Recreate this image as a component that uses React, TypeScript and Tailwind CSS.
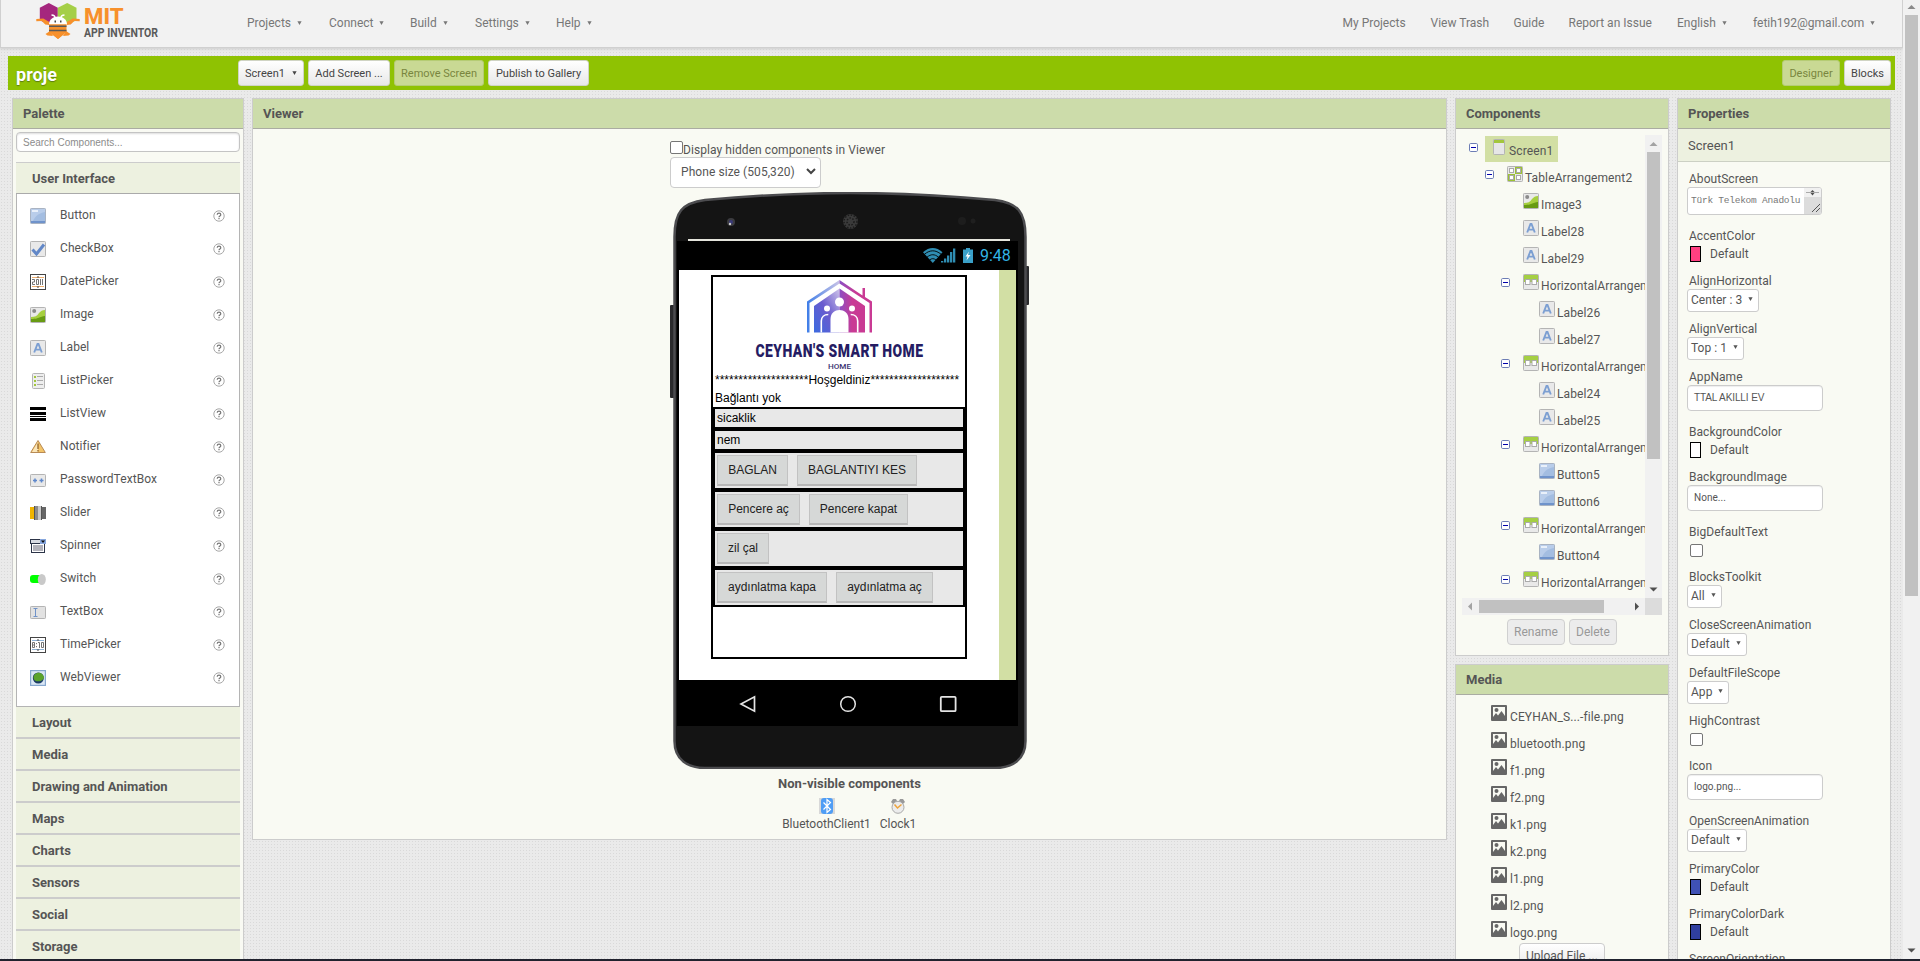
import React from "react";

type IconName =
  | "button" | "checkbox" | "date" | "image" | "label" | "listpicker" | "listview"
  | "notifier" | "password" | "slider" | "spinner" | "switch" | "textbox" | "time"
  | "web" | "screen" | "table" | "horizontal";

const Frame = () => (
  <rect x=".5" y=".5" width="15" height="15" rx=".8" fill="#e9e9e9" stroke="#b4b4b4" />
);

function Icon({ name }: { name: IconName }) {
  return (
    <svg width="16" height="16" viewBox="0 0 16 16" className="block shrink-0">
      {name === "button" && (
        <>
          <rect x=".5" y=".5" width="15" height="15" rx=".8" fill="#a3bde1" stroke="#a9b3c2" />
          <path d="M1 1h14v3C9 5 5 8 3 13H1z" fill="#b9cdea" />
          <path d="M2 2h6v2H2z" fill="#e9f0fa" />
          <path d="M1 13h14v2H1z" fill="#6f93cb" />
        </>
      )}
      {name === "checkbox" && (
        <>
          <Frame />
          <path d="M2.5 8.5l4 4.5L14 3.5" fill="none" stroke="#6288c8" strokeWidth="3" />
        </>
      )}
      {(name === "date" || name === "time") && (
        <>
          <rect x=".5" y=".5" width="15" height="15" fill="#fff" stroke="#444" />
          <path d="M2 3.5h12M2 12.5h12" stroke={name === "date" ? "#f0b070" : "#8fb4d8"} />
          <path d="M6.500 3.500l1.500-1.500 1.500 1.500zM6.500 12.500l1.500 1.500 1.500-1.500z" fill="#444" />
          {name === "date" ? (
            <path d="M2 5.500h2.500v2.500h-2v2.500h2.500M6.500 5.500h2v5h-2zM10.500 5v6M12.500 5v6" fill="none" stroke="#666" strokeWidth=".9" />
          ) : (
            <path d="M2.500 5.500h2v5h-2zM2.500 8h2M6.500 6v1.200M6.500 9v1.200M8 5.500h1.500v5.500M11.500 5.500h2v5h-2z" fill="none" stroke="#666" strokeWidth=".9" />
          )}
        </>
      )}
      {name === "image" && (
        <>
          <Frame />
          <circle cx="4.200" cy="4" r="2" fill="#8b8b8b" />
          <path d="M1 10c4 0 6-1 8-4 2-2 3-3 6-3v12H1z" fill="#a6cf3f" />
          <path d="M1 12c5 0 7-1 10-2 2-1 3-1 4-1v6H1z" fill="#689b13" />
        </>
      )}
      {name === "label" && (
        <>
          <Frame />
          <path d="M4.200 12.500L7.500 4h1L11.800 12.500M5.500 9.600h5" fill="none" stroke="#7c9fd2" strokeWidth="1.900" />
        </>
      )}
      {name === "listpicker" && (
        <>
          <rect x="2.500" y=".5" width="12" height="15" rx="1" fill="#eee" stroke="#b4b4b4" />
          <path d="M4 4h2M4 8h2M4 12h2" stroke="#a2c63c" strokeWidth="2" />
          <path d="M7 3.500h6M7 7.500h6M7 11.500h6" stroke="#aaa" />
        </>
      )}
      {name === "listview" && <path d="M0 1h16v3H0zM0 6h16v3H0zM0 10h16v1H0zM0 12h16v3H0z" fill="#000" />}
      {name === "notifier" && (
        <>
          <path d="M8 1.500L15.300 13.500H.7z" fill="#f3c469" stroke="#b88a55" />
          <path d="M8 3v10H2z" fill="#fae5b8" />
          <path d="M8 4.500v5.500M8 11v1.500" stroke="#8a5a22" strokeWidth="1.200" />
        </>
      )}
      {name === "password" && (
        <>
          <rect x=".5" y="2.500" width="15" height="12" rx=".8" fill="#e9e9e9" stroke="#b4b4b4" />
          <path d="M3 8.500h4M5 6.500v4M9.500 8.500h4M11.500 6.500v4" stroke="#5f88cc" strokeWidth="1.500" />
        </>
      )}
      {name === "slider" && (
        <>
          <path d="M0 2h5v12H0z" fill="#f0b400" />
          <path d="M11 2h5v12h-5z" fill="#666" />
          <rect x="5" y="1" width="3" height="14" fill="#8a8a8a" />
          <rect x="8" y="1" width="3" height="14" fill="#c9c9c9" />
          <path d="M4.500 1v14M11.500 1v14" stroke="#555" />
        </>
      )}
      {name === "spinner" && (
        <>
          <rect x="1.500" y="5" width="13" height="9.500" fill="#fff" stroke="#2c3448" />
          <rect x=".5" y="1.500" width="15" height="4" fill="#d8dbe2" stroke="#2c3448" />
          <rect x="10" y="1" width="6" height="5" fill="#86a6dd" />
          <path d="M11 2.500h4L13 5z" fill="#111" />
          <path d="M3 8h10M3 10h10M3 12h10" stroke="#667" />
        </>
      )}
      {name === "switch" && (
        <>
          <rect x="0" y="4" width="12" height="8" rx="3" fill="#0f0" />
          <ellipse cx="11.800" cy="8.500" rx="4" ry="5.500" fill="#c9c9c9" />
        </>
      )}
      {name === "textbox" && (
        <>
          <rect x=".5" y="2.500" width="15" height="12" rx=".8" fill="#e2e2e2" stroke="#b4b4b4" />
          <path d="M3.500 4.500h4M3.500 12.500h4M5.500 4.500v8" stroke="#7193c8" />
        </>
      )}
      {name === "web" && (
        <>
          <rect x=".5" y=".5" width="15" height="15" fill="#dbe8f5" stroke="#87a8cf" strokeWidth="1.400" />
          <circle cx="8.300" cy="8" r="5.500" fill="#1c3c66" />
          <path d="M3.500 7.500c0-4 6-6.500 9-3s1 5-2 6.500c-3 1-7 0-7-3.500z" fill="#5ba32c" />
        </>
      )}
      {name === "screen" && (
        <>
          <rect x="2.500" y=".5" width="11" height="15" rx=".8" fill="#e6e6e6" stroke="#b4b4b4" />
          <path d="M3 1h10v3H3z" fill="#a2c63c" />
        </>
      )}
      {name === "table" && (
        <>
          <Frame />
          <path d="M8 1h7v7H8zM1 8h7v7H1z" fill="#9cc233" />
          <g fill="#fff" stroke="#aaa">
            <rect x="2.500" y="2.500" width="4" height="4" />
            <rect x="9.500" y="2.500" width="4" height="4" />
            <rect x="2.500" y="9.500" width="4" height="4" />
            <rect x="9.500" y="9.500" width="4" height="4" />
          </g>
        </>
      )}
      {name === "horizontal" && (
        <>
          <Frame />
          <path d="M1 1h14v7H1z" fill="#a5cf43" />
          <g fill="#fff" stroke="#aaa">
            <rect x="2.500" y="5.500" width="4.500" height="5" />
            <rect x="9" y="5.500" width="4.500" height="5" />
          </g>
        </>
      )}
    </svg>
  );
}

const Arrow = ({ className = "" }: { className?: string }) => (
  <svg width="5" height="4" viewBox="0 0 5 4" className={"mb-[1px] shrink-0 " + className}>
    <path d="M.4.2h4.200L2.500 4z" fill="currentColor" />
  </svg>
);

function Logo() {
  return (
    <svg width="130" height="42" viewBox="34 0 130 42" className="block">
      <path d="M48.800 3l9 4.800V20l-9 4-9-3.500V7.800z" fill="#a5277e" />
      <path d="M67.200 3l9.300 4.800v12.700l-9.300 3.500-9.400-4V7.800z" fill="#a5cf47" />
      <path d="M36.300 19l7-.5 6 3.500v3l-4-.5-3.500-3.500-5.500.3zM79.700 19l-7-.5-6 3.500v3l4-.5 3.500-3.500 5.500.3z" fill="#f7902b" />
      <path d="M49 24.500c0-5 4-8 9-8s9 3 9 8z" fill="#fff" />
      <path d="M55 17.500c0-2-1-2.300-3.500-2.500M61 17.500c0-2 1-2.300 3.500-2.500" fill="none" stroke="#fff" strokeWidth="1.400" />
      <path d="M54.500 20.500h1.500v2h-1.500zM60 20.500h1.500v2H60z" fill="#444" />
      <path d="M49 24.300h17.500V32L58 39l-9-7z" fill="#f7902b" />
      <path d="M50 31l-4.500 3 2 1.500 5.500.5zM66 31l4.500 3-2 1.500-5.500.5z" fill="#f7902b" />
      <path d="M52 34h12l-6 5z" fill="#f7902b" />
      <path d="M49 26.300h17.500M49 30.500h17.500" stroke="#5a5a5a" strokeWidth="1.500" />
      <text x="84" y="24" textLength="39.500" lengthAdjust="spacingAndGlyphs" fontFamily="Roboto, sans-serif" fontWeight="800" fontSize="21.500" fill="#f7902b">MIT</text>
      <text x="84" y="36.500" textLength="74" lengthAdjust="spacingAndGlyphs" fontFamily="Roboto, sans-serif" fontWeight="700" fontSize="12.500" fill="#5a5a5a">APP INVENTOR</text>
    </svg>
  );
}

function Header() {
  const menu: [string, string][] = [
    ["Projects", "w-[82px]"],
    ["Connect", "w-[81px]"],
    ["Build", "w-[65px]"],
    ["Settings", "w-[81px]"],
    ["Help", "w-[60px]"],
  ];
  const right: [string, string, boolean][] = [
    ["My Projects", "w-[88px]", false],
    ["View Trash", "w-[83px]", false],
    ["Guide", "w-[55px]", false],
    ["Report an Issue", "w-[108.5px]", false],
    ["English", "w-[76px]", true],
    ["fetih192@gmail.com", "w-[149px]", true],
  ];
  return (
    <header className="flex h-[48px] shrink-0 border-r border-b border-l border-[#d0d0d0] bg-[#f2f2f2] text-[12px] leading-4 text-[#777] shadow-[0_1px_3px_#ccc]">
      <div className="w-[246px] pl-[33px]"><Logo /></div>
      <nav className="flex items-start pt-[15px]">
        {menu.map(([t, w]) => (
          <div key={t} className={"flex items-center whitespace-nowrap " + w}>
            {t}<Arrow className="ml-[6px]" />
          </div>
        ))}
      </nav>
      <nav className="ml-auto flex items-start pt-[15px]">
        {right.map(([t, w, a]) => (
          <div key={t} className={"flex items-center whitespace-nowrap " + w}>
            {t}{a && <Arrow className="ml-[6px]" />}
          </div>
        ))}
      </nav>
    </header>
  );
}

function BarButton({ children, width, off }: { children: React.ReactNode; width: string; off?: boolean }) {
  return (
    <div
      className={
        "flex h-[26px] items-center justify-center rounded-[3px] border pt-[1px] text-[11px] leading-4 whitespace-nowrap " +
        width +
        (off
          ? " border-[#b5cc74] bg-[#c9d994] text-[#79863f]"
          : " border-[#d0d4c4] bg-gradient-to-b from-white to-[#e8e8e8] text-[#444]")
      }
    >
      {children}
    </div>
  );
}

function ProjectBar() {
  return (
    <div className="mt-[8px] mr-[8px] ml-[8px] flex h-[34px] shrink-0 bg-[#8fc202] px-[8px] pt-[4px]">
      <div className="w-[222px] pt-[3px] text-[18px] leading-6 font-bold text-white [text-shadow:0_1px_1px_#5c7d10]">proje</div>
      <div className="flex gap-1">
        <BarButton width="w-[66px]">Screen1<Arrow className="ml-[7px]" /></BarButton>
        <BarButton width="w-[82px]">Add Screen ...</BarButton>
        <BarButton width="w-[90px]" off>Remove Screen</BarButton>
        <BarButton width="w-[101px]">Publish to Gallery</BarButton>
      </div>
      <div className="-mr-[4px] ml-auto flex gap-1">
        <BarButton width="w-[58px]" off>Designer</BarButton>
        <BarButton width="w-[47px]">Blocks</BarButton>
      </div>
    </div>
  );
}

function Panel({ title, className, children }: { title: string; className: string; children: React.ReactNode }) {
  return (
    <section className={"flex shrink-0 flex-col overflow-hidden border border-[#ccc] bg-[#f9faf3] " + className}>
      <h2 className="h-[30px] shrink-0 border-b border-[#aaaca2] bg-[#ccdcaa] pl-[10px] text-[13px] leading-[29px] font-bold text-[#555]">
        {title}
      </h2>
      {children}
    </section>
  );
}

const paletteItems: [string, IconName][] = [
  ["Button", "button"], ["CheckBox", "checkbox"], ["DatePicker", "date"], ["Image", "image"],
  ["Label", "label"], ["ListPicker", "listpicker"], ["ListView", "listview"], ["Notifier", "notifier"],
  ["PasswordTextBox", "password"], ["Slider", "slider"], ["Spinner", "spinner"], ["Switch", "switch"],
  ["TextBox", "textbox"], ["TimePicker", "time"], ["WebViewer", "web"],
];
const sections = ["Layout", "Media", "Drawing and Animation", "Maps", "Charts", "Sensors", "Social", "Storage"];

function Palette() {
  return (
    <Panel title="Palette" className="h-[900px] w-[232px]">
      <div className="px-[3px] pt-[3px]">
        <div className="h-[20px] rounded-[4px] border border-[#c4c4c4] bg-white pl-[6px] font-['Liberation_Sans',sans-serif] text-[10px] leading-[19px] text-[#8c8c8c] shadow-[inset_0_1px_2px_#ddd]">
          Search Components...
        </div>
        <div className="mt-[10px] h-[32px] border-t border-b border-t-[#ccc] border-b-[#aaa] bg-[#edf1e0] pl-[16px] text-[13px] leading-[32px] font-bold text-[#555]">
          User Interface
        </div>
        <div className="h-[513px] border-r border-b border-l border-[#b4b4b4] bg-white pt-[6px]">
          {paletteItems.map(([t, n]) => (
            <div key={t} className="flex h-[33px] pr-[14px] pl-[13px]">
              <div className="pt-[8px]"><Icon name={n} /></div>
              <div className="ml-[14px] pt-[7px] text-[12px] leading-4 tracking-[0.07px] text-[#555]">{t}</div>
              <svg width="12" height="12" viewBox="0 0 12 12" className="mt-[10px] ml-auto">
                <circle cx="6" cy="6" r="5.200" fill="#fff" stroke="#a8a8a8" />
                <path d="M4.200 4.800c0-2.200 3.600-2.200 3.600 0 0 1.200-1.800 1.200-1.800 2.400M6 8v1.200" fill="none" stroke="#777" strokeWidth="1.200" />
              </svg>
            </div>
          ))}
        </div>
        {sections.map((s) => (
          <div key={s} className="h-[32px] border-b-2 border-[#ccc] bg-[#edf1e0] pl-[16px] text-[13px] leading-[32px] font-bold text-[#555]">
            {s}
          </div>
        ))}
      </div>
    </Panel>
  );
}

const MockLabel = ({ children }: { children: string }) => (
  <div className="h-[22px] border-2 border-black bg-[#e8e8e8] pt-[1px] pl-[2px]">{children}</div>
);

function MockButtons({ items }: { items: [string, string][] }) {
  return (
    <div className="flex h-[39px] gap-[9px] border-2 border-black bg-[#e8e8e8] pt-[2px] pl-[2px]">
      {items.map(([t, w]) => (
        <div key={t} className={"h-[31px] border border-b-2 border-[#c2c2c2] border-b-[#b8b8b8] bg-[#d6d8d7] pt-[6px] text-center text-[#222] whitespace-nowrap " + w}>
          {t}
        </div>
      ))}
    </div>
  );
}

function HomeLogo() {
  return (
    <svg width="252" height="95" viewBox="713 277 252 95" className="block">
      <defs>
        <linearGradient id="blue" x1="0" x2="1"><stop offset="0" stopColor="#3f7ee8" /><stop offset="1" stopColor="#c9c3e6" /></linearGradient>
        <linearGradient id="pink" x1="0" x2="1"><stop offset="0" stopColor="#8a4fc4" /><stop offset=".5" stopColor="#c93a94" /><stop offset="1" stopColor="#c93a94" /></linearGradient>
        <linearGradient id="wall" x1="0" y1="1" x2="1" y2="0"><stop offset="0" stopColor="#3b6be0" /><stop offset=".5" stopColor="#6a5bce" /><stop offset="1" stopColor="#cfc4ea" /></linearGradient>
      </defs>
      <path d="M807 332.500V301.500L839.500 280v3.500L809.500 303v29.500z" fill="url(#blue)" />
      <path d="M872 332.500V301.500L865 297V288h-2.500v7.500L839.500 280v3.500L869.500 303v29.500z" fill="url(#pink)" />
      <path d="M814 332.500V306l25.500-17.500V332.500z" fill="url(#wall)" />
      <path d="M839.500 288.500L865 306v26.500H839.500z" fill="url(#pink)" />
      <path d="M830.500 332.500V319c0-12 18-12 18 0v13.500z" fill="#fff" />
      <circle cx="839.500" cy="302" r="4.500" fill="#fff" />
      <circle cx="827" cy="308.500" r="3" fill="#fff" />
      <circle cx="852" cy="308.500" r="3" fill="#fff" />
      <path d="M821.300 332.500V321c0-4 3-6.500 7-6.500M857.700 332.500V321c0-4-3-6.500-7-6.500" fill="none" stroke="#fff" strokeWidth="1.600" />
      <text x="755.500" y="356.800" textLength="168" lengthAdjust="spacingAndGlyphs" fontFamily="Roboto, sans-serif" fontWeight="900" fontSize="19" letterSpacing=".6" fill="#251c63">CEYHAN'S SMART HOME</text>
      <text x="828" y="368.500" textLength="23" lengthAdjust="spacingAndGlyphs" fontFamily="Roboto, sans-serif" fontWeight="500" fontSize="7.500" fill="#3a3270">HOME</text>
    </svg>
  );
}

function Phone() {
  return (
    <div className="relative mt-[4px] h-[577px] w-[359px]">
      <svg width="359" height="577" viewBox="0 0 359 577" className="absolute inset-0">
        <rect x="0" y="113" width="5" height="93" rx="1" fill="#2a2a2c" />
        <rect x="355" y="74" width="4" height="39" rx="1" fill="#2a2a2c" />
        <path
          d="M4.500 45C4.500 20 12 11 35 8 C90 3 135 1 180 1 C225 1 270 3 325 8 C348 11 355.500 20 355.500 45 V549 C355.500 568 342 576 325 576 H35 C18 576 4.500 568 4.500 549Z"
          fill="#141414" stroke="#4c4c4f" strokeWidth="2.500"
        />
        <circle cx="61" cy="30" r="4" fill="#3c3c40" />
        <circle cx="61" cy="30" r="2" fill="#3a3a78" />
        <circle cx="60" cy="32" r="1.200" fill="#ccc" />
        <circle cx="180.500" cy="29.500" r="7.500" fill="#3a3a3a" />
        <circle cx="180.500" cy="29.500" r="6.500" fill="none" stroke="#1c1c1c" strokeDasharray="1.500 1.500" strokeWidth="1.500" />
        <circle cx="180.500" cy="29.500" r="3.500" fill="none" stroke="#1c1c1c" strokeDasharray="1.500 1.500" strokeWidth="1.500" />
        <circle cx="292" cy="29" r="4" fill="#1d1d1d" />
        <circle cx="303" cy="29" r="2.500" fill="#1f1f1f" />
      </svg>
      <div className="relative pl-[7px]">
        <div className="flex h-[49px] items-end pl-[11px]"><div className="h-[2px] w-[322px] bg-[#e4e4dc]" /></div>
        <div className="flex h-[29px] w-[341px] bg-black">
          <svg width="52" height="17" viewBox="0 0 52 17" className="mt-[6px] ml-[246px]">
            <path d="M0 5.200C6-.5 13.500-.5 19.500 5.200L9.800 16z" fill="#2f8db2" />
            <path d="M1.500 7.200c5.500-4.500 11-4.500 16.500 0M4 10.200c4-3.300 7.600-3.300 11.500 0M6.500 13c2.300-1.800 4.300-1.800 6.500 0" fill="none" stroke="#000" strokeWidth=".9" />
            <path d="M18 14h2.300v1.500H18zM21 11.500h2.300v4H21zM24 8.500h2.300v7H24zM27 5h2.300v10.500H27zM30 1.500h2.300v14H30z" fill="#2f8db2" />
            <path d="M40 2.500h3V1h4v1.500h3v13.500H40z" fill="#3aa0c8" />
            <path d="M46 4.500l-3.500 5h2l-1 4 4-5.500h-2.500z" fill="#fff" />
          </svg>
          <div className="ml-[5px] pt-[5px] text-[16px] leading-5 text-[#33b5e5]">9:48</div>
        </div>
        <div className="flex h-[410px] w-[341px] border-r-2 border-l-2 border-black bg-[#d2dfa4]">
          <div className="w-[320px] bg-white pt-[5px] pl-[32px]">
            <div className="h-[384px] w-[256px] border-2 border-black font-['Liberation_Sans',Arial,sans-serif] text-[12px] leading-4 text-black">
              <HomeLogo />
              <div className="h-[18px] pl-[2px] whitespace-nowrap">********************Hoşgeldiniz*******************</div>
              <div className="h-[17px] pl-[2px]">Bağlantı yok</div>
              <MockLabel>sicaklik</MockLabel>
              <MockLabel>nem</MockLabel>
              <MockButtons items={[["BAGLAN", "w-[71px]"], ["BAGLANTIYI KES", "w-[120px]"]]} />
              <MockButtons items={[["Pencere aç", "w-[83px]"], ["Pencere kapat", "w-[99px]"]]} />
              <MockButtons items={[["zil çal", "w-[52px]"]]} />
              <MockButtons items={[["aydınlatma kapa", "w-[110px]"], ["aydınlatma aç", "w-[97px]"]]} />
            </div>
          </div>
        </div>
        <div className="flex h-[46px] w-[341px] bg-black pt-[15px] pl-[62px] text-[#e4e4e4]">
          <svg width="18" height="18" viewBox="0 0 18 18"><path d="M15.500 1.800v14.400L2 9z" fill="none" stroke="currentColor" strokeWidth="1.700" /></svg>
          <svg width="18" height="18" viewBox="0 0 18 18" className="ml-[82px]"><circle cx="9" cy="9" r="7.300" fill="none" stroke="currentColor" strokeWidth="1.500" /></svg>
          <svg width="18" height="18" viewBox="0 0 18 18" className="ml-[82px]"><rect x="1.800" y="1.800" width="14.800" height="14.400" rx="1" fill="none" stroke="currentColor" strokeWidth="1.800" /></svg>
        </div>
      </div>
    </div>
  );
}

function Viewer() {
  return (
    <Panel title="Viewer" className="h-[742px] w-[1195px]">
      <div className="flex flex-col pl-[417px] text-[12px] leading-4 text-[#555]">
        <div className="flex pt-[12px]">
          <div className="h-[13px] w-[13px] rounded-[2px] border border-[#767676] bg-white" />
          <div className="pt-[1px] tracking-[0.07px]">Display hidden components in Viewer</div>
        </div>
        <div className="-mt-[1px] flex h-[31px] w-[151px] items-center rounded-[4px] border border-[#ccc] bg-white pb-[2px] pl-[10px]">
          <span className="w-[125px] tracking-[0.07px]">Phone size (505,320)</span>
          <svg width="10" height="7" viewBox="0 0 10 7"><path d="M1 1l4 4 4-4" fill="none" stroke="#444" strokeWidth="2" /></svg>
        </div>
        <Phone />
        <div className="w-[359px] pt-[7px] text-center text-[13px] leading-4 font-bold">Non-visible components</div>
        <div className="flex pt-[6px] pl-[112px]">
          <div className="flex w-[89px] flex-col items-center">
            <svg width="16" height="16" viewBox="0 0 16 16">
              <rect width="16" height="16" fill="#d8d8d8" />
              <rect x="2" width="12" height="16" rx="3" fill="#4f9df5" />
              <path d="M4.500 4.500l7 7L8 14.500V1.500l3.500 3-7 7" fill="none" stroke="#fff" strokeWidth="1.200" />
            </svg>
            <div className="pt-[2px]">BluetoothClient1</div>
          </div>
          <div className="ml-[8px] flex w-[37px] flex-col items-center">
            <svg width="16" height="16" viewBox="0 0 16 16">
              <path d="M1 4l2-3h3l1 2-4 3zM15 4l-2-3h-3L9 3l4 3z" fill="#999" />
              <circle cx="8" cy="9.300" r="6" fill="#ececec" stroke="#a8a8a8" />
              <path d="M4.500 6.500L7.500 10l4-3.500" fill="none" stroke="#eda33c" strokeWidth="1.500" />
            </svg>
            <div className="pt-[2px] pl-[1px]">Clock1</div>
          </div>
        </div>
      </div>
    </Panel>
  );
}

type Node = { name: string; icon: IconName; level: number; open?: boolean };
const tree: Node[] = [
  { name: "Screen1", icon: "screen", level: 0, open: true },
  { name: "TableArrangement2", icon: "table", level: 1, open: true },
  { name: "Image3", icon: "image", level: 2 },
  { name: "Label28", icon: "label", level: 2 },
  { name: "Label29", icon: "label", level: 2 },
  { name: "HorizontalArrangement9", icon: "horizontal", level: 2, open: true },
  { name: "Label26", icon: "label", level: 3 },
  { name: "Label27", icon: "label", level: 3 },
  { name: "HorizontalArrangement8", icon: "horizontal", level: 2, open: true },
  { name: "Label24", icon: "label", level: 3 },
  { name: "Label25", icon: "label", level: 3 },
  { name: "HorizontalArrangement2", icon: "horizontal", level: 2, open: true },
  { name: "Button5", icon: "button", level: 3 },
  { name: "Button6", icon: "button", level: 3 },
  { name: "HorizontalArrangement3", icon: "horizontal", level: 2, open: true },
  { name: "Button4", icon: "button", level: 3 },
  { name: "HorizontalArrangement4", icon: "horizontal", level: 2, open: true },
];
const indents = ["pl-[7px]", "pl-[23px]", "pl-[39px]", "pl-[55px]"];

function TreeRow({ node }: { node: Node }) {
  return (
    <div className={"flex h-[27px] " + indents[node.level]}>
      <svg width="9" height="9" viewBox="0 0 9 9" className={"mt-[7px] shrink-0 " + (node.open ? "" : "invisible")}>
        <rect x=".5" y=".5" width="8" height="8" rx="1.200" fill="#fff" stroke="#6d7db5" />
        <path d="M2 4.500h5" stroke="#00a" />
      </svg>
      <div className={"ml-[7px] flex h-[26px] pt-[3px] pr-[5px] pl-[6px] " + (node.level === 0 ? "bg-[#d2dfa4]" : "")}>
        <Icon name={node.icon} />
        <span className="ml-[2px] pt-[4px] tracking-[0.12px] whitespace-nowrap">{node.name}</span>
      </div>
    </div>
  );
}

const SmallButton = ({ children, width }: { children: string; width: string }) => (
  <div className={"h-[26px] rounded-[4px] border border-[#d0d0d0] bg-[#ececec] text-center text-[12px] leading-[25px] text-[#999] " + width}>
    {children}
  </div>
);

function Components() {
  return (
    <Panel title="Components" className="h-[558px] w-[214px]">
      <div className="mt-[6px] ml-[6px] w-[200px]">
        <div className="flex h-[463px]">
          <div className="w-[183px] overflow-hidden pt-[1px] text-[12px] leading-4 text-[#555]">
            {tree.map((n, i) => <TreeRow key={i} node={n} />)}
          </div>
          <div className="flex w-[17px] flex-col items-center bg-[#f1f1f1]">
            <svg width="17" height="17" viewBox="0 0 17 17"><path d="M4.500 11h8l-4-4z" fill="#a3a3a3" /></svg>
            <div className="h-[307px] w-[13px] bg-[#c1c1c1]" />
            <svg width="17" height="17" viewBox="0 0 17 17" className="mt-auto"><path d="M4.500 6.500h8l-4 4z" fill="#505050" /></svg>
          </div>
        </div>
        <div className="flex h-[17px] items-center bg-[#f1f1f1]">
          <svg width="17" height="17" viewBox="0 0 17 17"><path d="M10 4.500v8l-4-4z" fill="#a3a3a3" /></svg>
          <div className="h-[13px] w-[125px] bg-[#c1c1c1]" />
          <svg width="17" height="17" viewBox="0 0 17 17" className="ml-auto"><path d="M7 4.500v8l4-4z" fill="#505050" /></svg>
          <div className="h-[17px] w-[17px] bg-[#dcdcdc]" />
        </div>
        <div className="mt-[4px] flex gap-1 pl-[45px]">
          <SmallButton width="w-[58px]">Rename</SmallButton>
          <SmallButton width="w-[48px]">Delete</SmallButton>
        </div>
      </div>
    </Panel>
  );
}

const files = ["CEYHAN_S...-file.png", "bluetooth.png", "f1.png", "f2.png", "k1.png", "k2.png", "l1.png", "l2.png", "logo.png"];

function Media() {
  return (
    <Panel title="Media" className="mt-[8px] h-[400px] w-[214px]">
      <div className="pt-[8px] pl-[35px] text-[12px] leading-4 text-[#555]">
        {files.map((f) => (
          <div key={f} className="flex h-[27px] pt-[2px]">
            <svg width="16" height="16" viewBox="0 0 16 16" className="shrink-0">
              <path fillRule="evenodd" d="M1 0h14a1 1 0 0 1 1 1v14a1 1 0 0 1-1 1H1a1 1 0 0 1-1-1V1a1 1 0 0 1 1-1zM2 2v10l3-4 2 2.500L10.500 6 14 11V2z" fill="#666" />
              <circle cx="5.500" cy="5" r="2" fill="#666" />
            </svg>
            <span className="ml-[3px] pt-[4px] tracking-[0.1px]">{f}</span>
          </div>
        ))}
        <div className="-mt-[3px] ml-[28px] h-[26px] w-[86px] rounded-[4px] border border-[#ccc] bg-gradient-to-b from-white to-[#e8e8e8] pl-[6px] leading-[25px]">
          Upload File ...
        </div>
      </div>
    </Panel>
  );
}

const Prop = ({ name, height = "h-[45px]", children }: { name: string; height?: string; children?: React.ReactNode }) => (
  <div className={height}>
    <div className="pl-[2px]">{name}</div>
    {children}
  </div>
);
const Swatch = ({ color }: { color: string }) => (
  <div className="flex pl-[3px]">
    <div className={"mt-[2px] h-[16px] w-[11px] border border-black " + color} />
    <span className="ml-[9px] pt-[2px]">Default</span>
  </div>
);
const Select = ({ value, width }: { value: string; width: string }) => (
  <div className={"flex h-[23px] items-center rounded-[3px] border border-[#ccc] bg-white pb-[2px] pl-[3px] whitespace-nowrap " + width}>
    {value}<Arrow className="ml-[6px]" />
  </div>
);
const Input = ({ value, sans }: { value: string; sans?: boolean }) => (
  <div className={"h-[26px] w-[136px] rounded-[4px] border border-[#ccc] bg-white pl-[6px] text-[10px] leading-[24px] shadow-[inset_0_1px_1px_#eee] " + (sans ? "font-['Liberation_Sans',sans-serif] tracking-[-0.1px]" : "")}>
    {value}
  </div>
);
const Check = () => <div className="mt-[4px] ml-[3px] h-[13px] w-[13px] rounded-[2px] border border-[#767676] bg-white" />;

function Properties() {
  return (
    <Panel title="Properties" className="h-[900px] w-[214px]">
      <div className="h-[33px] shrink-0 border-b border-[#ccd0c4] bg-[#edf1e0] pl-[10px] text-[13px] leading-[33px] text-[#555]">Screen1</div>
      <div className="pt-[9px] pl-[9px] text-[12px] leading-4 tracking-[0.04px] text-[#555]">
        <Prop name="AboutScreen" height="h-[57px]">
          <div className="flex h-[28px] w-[135px] overflow-hidden rounded-[3px] border border-[#ccc] bg-white pl-[3px]">
            <span className="w-[113px] shrink-0 overflow-hidden font-['Liberation_Mono',monospace] text-[9.500px] leading-[26px] tracking-[-0.24px] whitespace-nowrap text-[#777]">Türk Telekom Anadolu</span>
            <svg width="17" height="26" viewBox="0 0 17 26" className="shrink-0">
              <path d="M0 0h17v9H0z" fill="#f1f1f1" />
              <path d="M0 9h17v17H0z" fill="#dcdcdc" />
              <path d="M2 4.500h13" stroke="#aaa" />
              <path d="M6.500 4h4l-2-2zM6.500 5h4l-2 2.500z" fill="#505050" />
              <path d="M8 24l8-8M12 24l4-4" stroke="#555" />
            </svg>
          </div>
        </Prop>
        <Prop name="AccentColor"><Swatch color="bg-[#ff4081]" /></Prop>
        <Prop name="AlignHorizontal" height="h-[48px]"><Select value="Center : 3" width="w-[72px]" /></Prop>
        <Prop name="AlignVertical" height="h-[48px]"><Select value="Top : 1" width="w-[57px]" /></Prop>
        <Prop name="AppName" height="h-[55px]"><Input value="TTAL AKILLI EV" sans /></Prop>
        <Prop name="BackgroundColor"><Swatch color="bg-white" /></Prop>
        <Prop name="BackgroundImage" height="h-[55px]"><Input value="None..." /></Prop>
        <Prop name="BigDefaultText"><Check /></Prop>
        <Prop name="BlocksToolkit" height="h-[48px]"><Select value="All" width="w-[35px]" /></Prop>
        <Prop name="CloseScreenAnimation" height="h-[48px]"><Select value="Default" width="w-[60px]" /></Prop>
        <Prop name="DefaultFileScope" height="h-[48px]"><Select value="App" width="w-[42px]" /></Prop>
        <Prop name="HighContrast"><Check /></Prop>
        <Prop name="Icon" height="h-[55px]"><Input value="logo.png..." /></Prop>
        <Prop name="OpenScreenAnimation" height="h-[48px]"><Select value="Default" width="w-[60px]" /></Prop>
        <Prop name="PrimaryColor"><Swatch color="bg-[#3f51b5]" /></Prop>
        <Prop name="PrimaryColorDark"><Swatch color="bg-[#303f9f]" /></Prop>
        <Prop name="ScreenOrientation" />
      </div>
    </Panel>
  );
}

export default function App() {
  return (
    <div className="flex h-[961px] w-[1920px] flex-col overflow-hidden bg-[#20222e] font-[Roboto,sans-serif]">
      <div className="flex h-[959px] shrink-0 overflow-hidden">
        <div className="flex w-[1903px] shrink-0 flex-col bg-[#eaeaea] bg-[radial-gradient(circle,#d9d9d9_0.6px,transparent_1px)] bg-[size:3px_3px]">
          <Header />
          <ProjectBar />
          <main className="mt-[8px] flex items-start gap-2 pl-[12px]">
            <Palette />
            <Viewer />
            <div className="flex flex-col">
              <Components />
              <Media />
            </div>
            <Properties />
          </main>
        </div>
        <div className="flex w-[17px] flex-col items-center bg-[#f1f1f1]">
          <svg width="17" height="15" viewBox="0 0 17 15"><path d="M4.500 9h8l-4-4z" fill="#8a8a8a" /></svg>
          <div className="h-[581px] w-[13px] bg-[#c1c1c1]" />
          <svg width="17" height="17" viewBox="0 0 17 17" className="mt-auto"><path d="M4.500 6.500h8l-4 4z" fill="#505050" /></svg>
        </div>
      </div>
    </div>
  );
}
